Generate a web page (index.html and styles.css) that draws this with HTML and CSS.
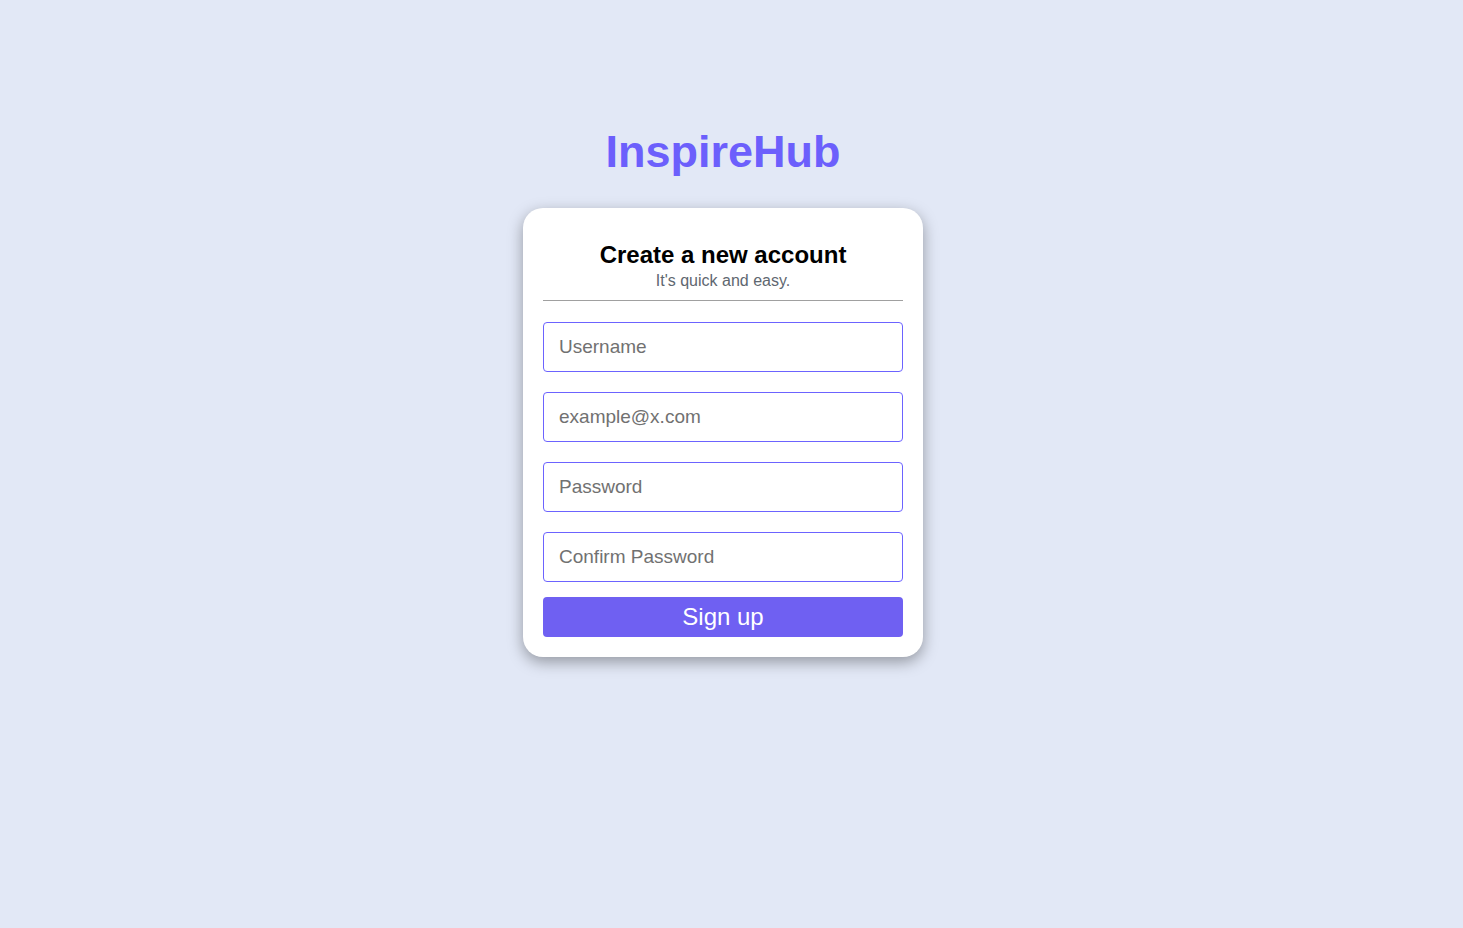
FILE: index.html
```html
<!DOCTYPE html>
<html lang="en">
<head>
<meta charset="utf-8">
<title>InspireHub - Sign up</title>
<link rel="stylesheet" href="styles.css">
</head>
<body>
<main class="page">
  <h1 class="brand">InspireHub</h1>
  <form class="card">
    <div class="card-head">
      <h2 class="card-title">Create a new account</h2>
      <p class="card-sub">It's quick and easy.</p>
    </div>
    <hr class="divider">
    <div class="fields">
      <input class="field" type="text" placeholder="Username">
      <input class="field" type="email" placeholder="example@x.com">
      <input class="field" type="password" placeholder="Password">
      <input class="field" type="password" placeholder="Confirm Password">
    </div>
    <button class="btn" type="button">Sign up</button>
  </form>
</main>
</body>
</html>
```
FILE: styles.css
```css
* { box-sizing: border-box; }
html, body { margin: 0; padding: 0; }
body {
  background: #e2e8f6;
  font-family: "Liberation Sans", Arial, sans-serif;
  min-height: 928px;
}
.page {
  display: flex;
  flex-direction: column;
  align-items: center;
  padding: 126px 17px 0 0;
}
.brand {
  margin: 0 0 30px;
  font-size: 45px;
  line-height: 52px;
  font-weight: 700;
  color: #6c5ffc;
}
.card {
  width: 400px;
  background: #fff;
  border-radius: 20px;
  padding: 20px;
  box-shadow: 0 5px 15px rgba(0, 0, 0, 0.35);
  display: flex;
  flex-direction: column;
}
.card-head {
  padding-top: 13px;
  text-align: center;
}
.card-title {
  margin: 0;
  font-size: 24px;
  line-height: 28px;
  font-weight: 700;
  color: #000;
}
.card-sub {
  margin: 2px 0 0;
  font-size: 16px;
  line-height: 19px;
  color: #606770;
}
.divider {
  border: 0;
  height: 1px;
  background: #a0a0a0;
  margin: 10px 0 21px;
}
.fields {
  display: flex;
  flex-direction: column;
  gap: 20px;
}
.field {
  height: 50px;
  width: 100%;
  border: 1px solid #6c63ff;
  border-radius: 4px;
  padding: 0 15px;
  font-family: "Liberation Sans", Arial, sans-serif;
  font-size: 19px;
  color: #333;
  background: #fff;
  outline: none;
}
.field::placeholder { color: #717171; }
.btn {
  margin-top: 15px;
  height: 40px;
  width: 100%;
  border: 0;
  border-radius: 4px;
  background: #6f60f2;
  color: #fff;
  font-family: "Liberation Sans", Arial, sans-serif;
  font-size: 24px;
  cursor: pointer;
}
```
